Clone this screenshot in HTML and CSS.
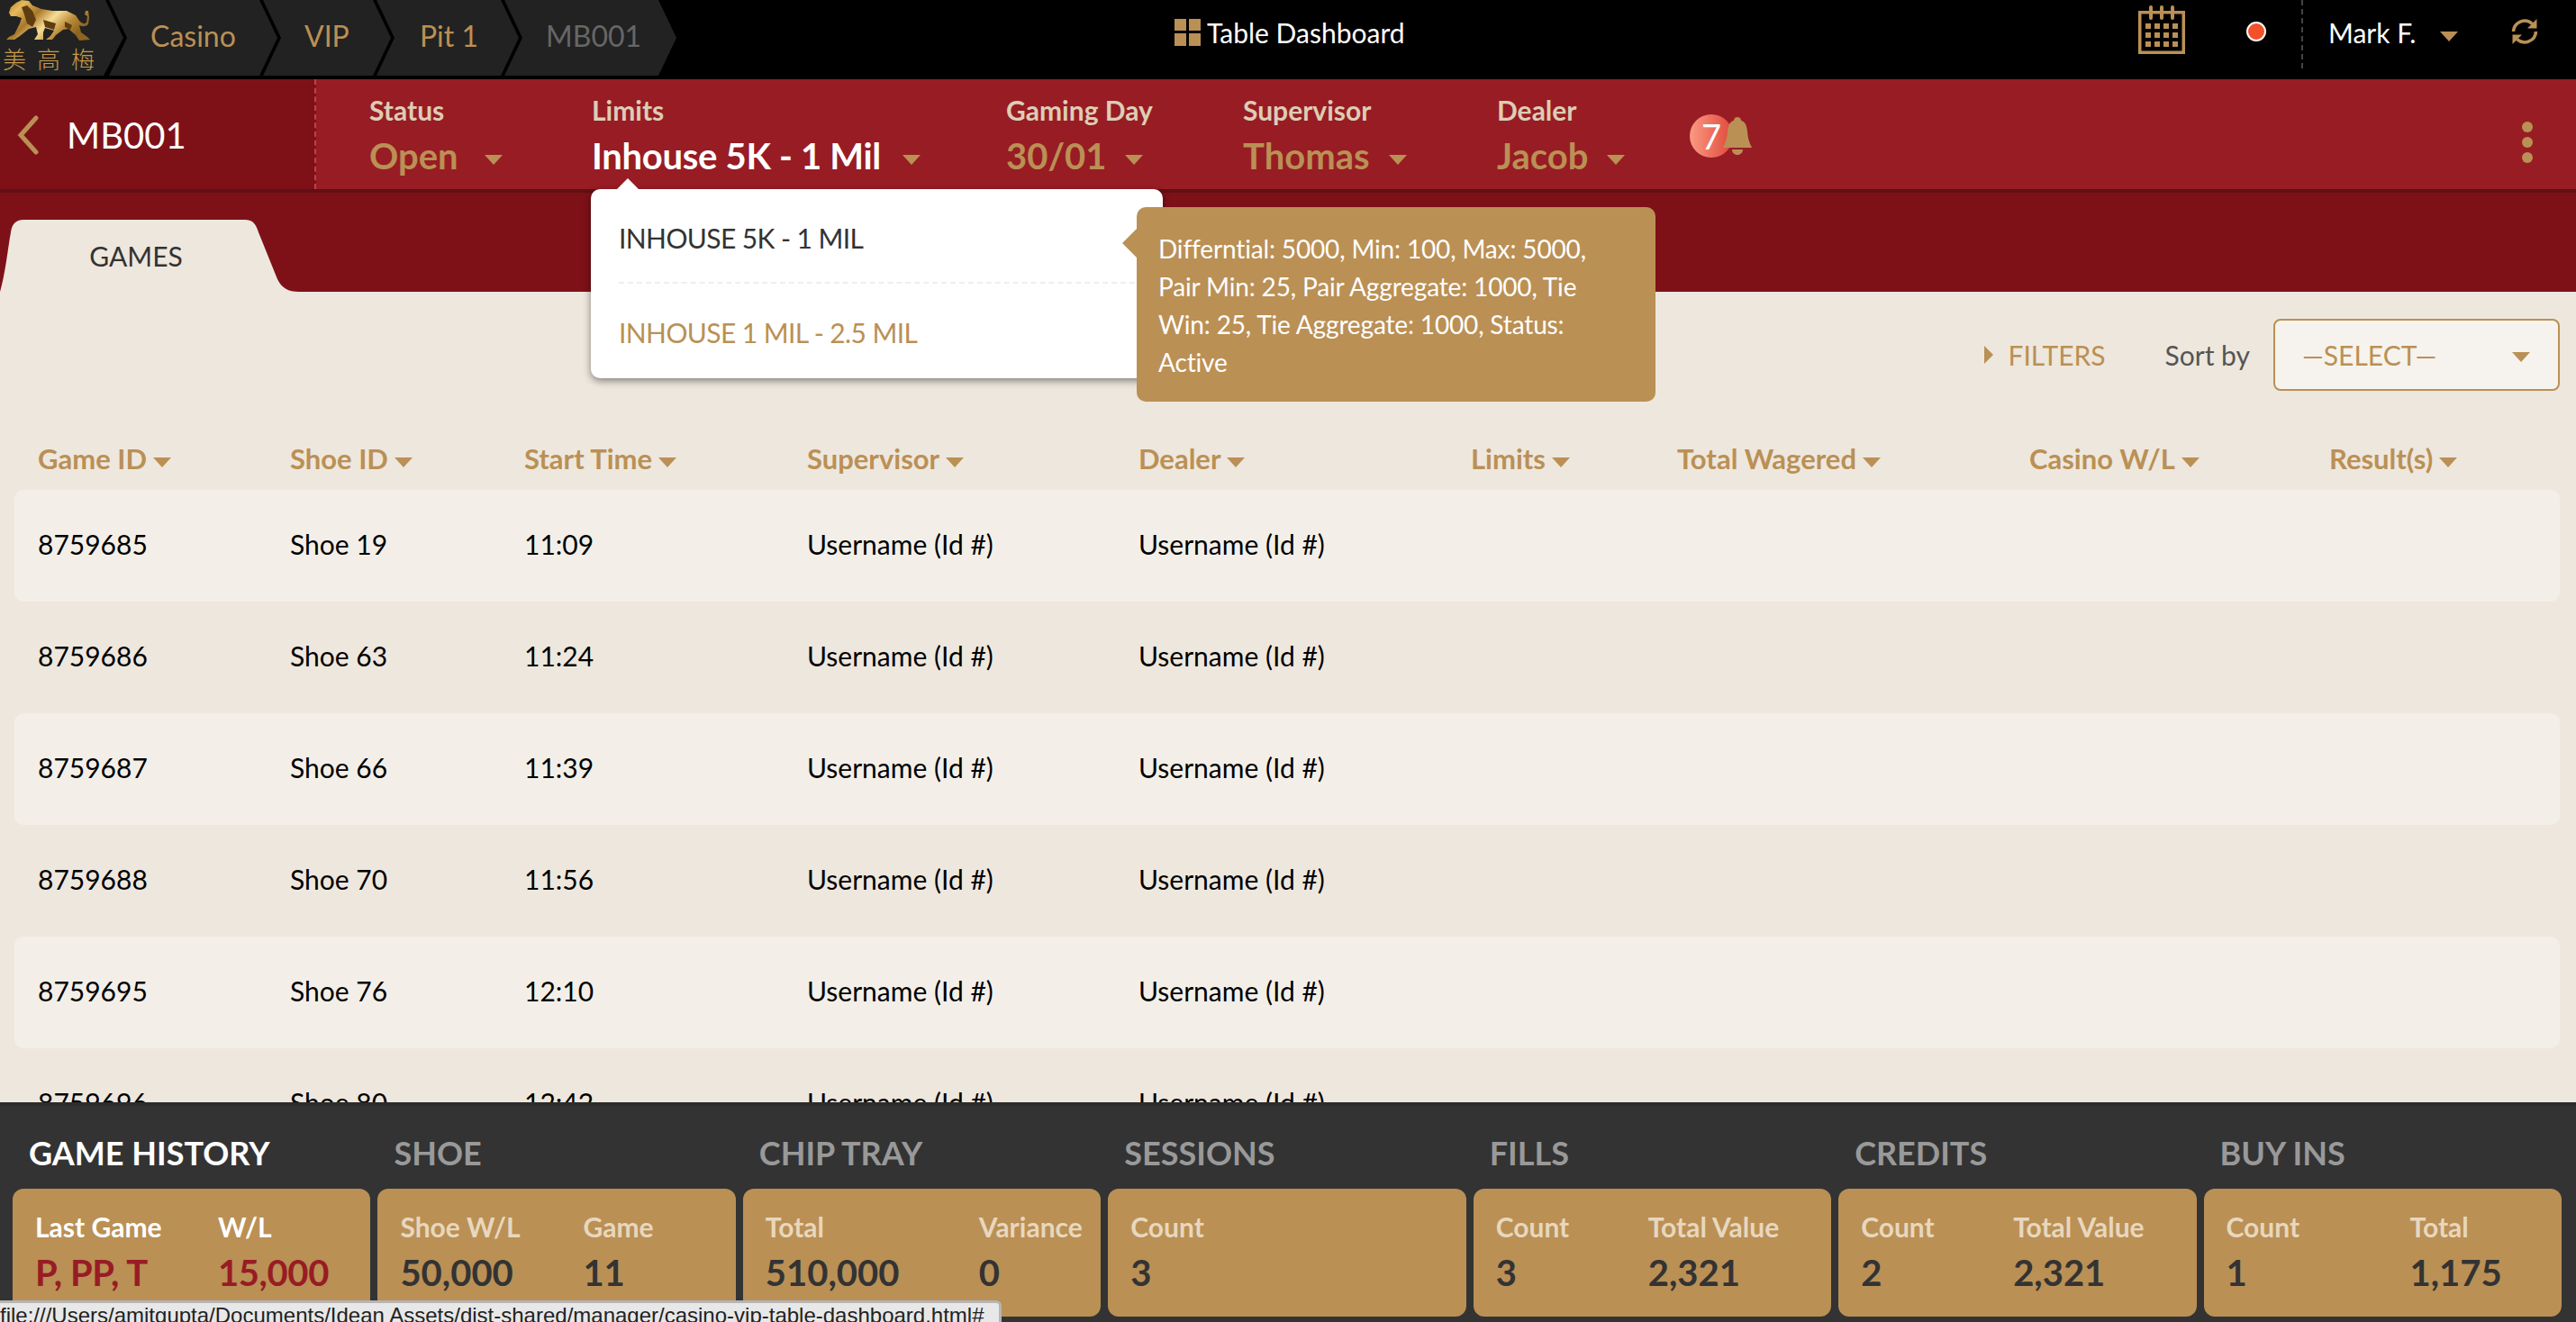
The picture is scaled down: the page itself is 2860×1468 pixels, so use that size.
FILE: index.html
```html
<!DOCTYPE html>
<html lang="en">
<head>
  <meta charset="UTF-8">
  <title>Table Dashboard</title>
  <link rel="stylesheet" href="styles.css">
</head>
<body>
<div class="page">
  <div class="topbar">
    <div class="crumbs">
      <div class="crumb crumb-logo">
        <svg class="lion" width="102" height="46" viewBox="0 0 102 46">
          <defs>
            <linearGradient id="gold" x1="0" y1="0" x2="1" y2="0.5">
              <stop offset="0" stop-color="#a87420"/>
              <stop offset="0.2" stop-color="#e6bb5c"/>
              <stop offset="0.42" stop-color="#a9772a"/>
              <stop offset="0.62" stop-color="#f6dd94"/>
              <stop offset="0.82" stop-color="#b98a38"/>
              <stop offset="1" stop-color="#8e6420"/>
            </linearGradient>
          </defs>
          <path fill="url(#gold)" d="M10 14 L12 8 L18 3 L24 0 L32 1 L36 6 L46 10 L58 12 L74 12 L84 17 L88 23 Q92 28 96 25 L97 18 L94 16 L95 12 L98 12 L99 20 L98 27 Q94 31 88 28 L90 36 L97 41 L100 44 L88 45 L84 39 L76 32 L70 33 L62 39 L58 44 L51 44 L56 40 L60 34 L50 31 L48 36 L48 44 L38 44 L42 38 L40 30 L32 32 L22 40 L16 44 L7 44 L10 41 L16 38 L22 26 L24 20 L18 18 L12 18 Z"/>
          <path fill="#5e3d10" d="M24 8 L30 6 L36 12 L40 22 L36 30 L30 26 L27 16 Z M48 22 L62 26 L60 33 L50 30 Z M72 24 L80 28 L78 33 L72 30 Z"/>
        </svg>
        <div class="logo-text"><span>美</span><span>高</span><span>梅</span></div>
      </div>
      <div class="crumb crumb-casino">Casino</div>
      <div class="crumb crumb-vip">VIP</div>
      <div class="crumb crumb-pit">Pit 1</div>
      <div class="crumb crumb-table">MB001</div>
    </div>
    <div class="page-title">
      <svg width="29" height="30" viewBox="0 0 29 30"><path fill="#ba9055" d="M0 0h13v13H0zM16 0h13v13H16zM0 16h13v14H0zM16 16h13v14H16z"/></svg>
      <span>Table Dashboard</span>
    </div>
    <div class="top-right">
      <svg class="cal" width="52" height="54" viewBox="0 0 52 54">
        <path fill="none" stroke="#ba9055" stroke-width="3.5" d="M1.750 7.750h48.500v44.500H1.750z"/>
        <path fill="none" stroke="#ba9055" stroke-width="4" stroke-linecap="round" d="M14 2v12M26 2v12M38 2v12"/>
        <path fill="#ba9055" d="M8 20h6v6H8zM18 20h6v6h-6zM28 20h6v6h-6zM38 20h6v6h-6zM8 30h6v6H8zM18 30h6v6h-6zM28 30h6v6h-6zM38 30h6v6h-6zM8 40h6v6H8zM18 40h6v6h-6zM28 40h6v6h-6zM38 40h6v6h-6z"/>
      </svg>
      <div class="live-dot"></div>
      <div class="user">Mark F.<i class="caret caret-user"></i></div>
      <svg class="refresh" width="30" height="30" viewBox="0 0 30 30">
        <path fill="none" stroke="#ba9055" stroke-width="3.6" d="M2.500 15A12.500 12.500 0 0 1 23.500 6.500"/>
        <path fill="#ba9055" d="M28.500 1v10.500H18z"/>
        <path fill="none" stroke="#ba9055" stroke-width="3.6" d="M27.500 15A12.500 12.500 0 0 1 6.500 23.500"/>
        <path fill="#ba9055" d="M1.500 29V18.500H12z"/>
      </svg>
    </div>
  </div>

  <div class="subbar">
    <div class="back">
      <svg width="24" height="44" viewBox="0 0 24 44"><path fill="none" stroke="#ba9055" stroke-width="5" stroke-linecap="round" d="M21 3L4 22l17 19"/></svg>
      <span>MB001</span>
    </div>
    <div class="fields">
      <div class="field field-status"><label>Status</label><div class="val">Open<i class="caret caret-open"></i></div></div>
      <div class="field field-limits">
        <label>Limits</label><div class="val val-active">Inhouse 5K - 1 Mil<i class="caret caret-limit"></i></div>
        <div class="limit-menu">
          <div class="limit-item">INHOUSE 5K - 1 MIL</div>
          <div class="limit-item limit-item-alt">INHOUSE 1 MIL - 2.5 MIL</div>
        </div>
        <div class="limit-tip">Differntial: 5000, Min: 100, Max: 5000, Pair Min: 25, Pair Aggregate: 1000, Tie Win: 25, Tie Aggregate: 1000, Status: Active</div>
      </div>
      <div class="field field-day"><label>Gaming Day</label><div class="val">30/01<i class="caret"></i></div></div>
      <div class="field field-sup"><label>Supervisor</label><div class="val">Thomas<i class="caret"></i></div></div>
      <div class="field field-dealer"><label>Dealer</label><div class="val">Jacob<i class="caret"></i></div></div>
      <div class="alerts">
        <div class="badge">7</div>
        <svg class="bell" width="32" height="42" viewBox="0 0 32 42"><path fill="#ba9055" d="M16 0c2.200 0 4 1.600 4 3.800C25 5.500 26.500 10 27 16c.5 7 2 12 5 18H0c3-6 4.500-11 5-18 .5-6 2-10.500 7-12.200C12 1.600 13.800 0 16 0zM10 36h12c0 3.500-2.600 6-6 6s-6-2.500-6-6z"/></svg>
      </div>
    </div>
    <div class="more"><span></span><span></span><span></span></div>
  </div>

  <div class="tabband">
    <div class="tab">GAMES</div>
  </div>

  <div class="main">
    <div class="toolbar">
      <div class="filters"><i class="tri-right"></i>FILTERS</div>
      <div class="sort-label">Sort by</div>
      <div class="select">—SELECT—<i class="caret"></i></div>
    </div>
    <div class="thead row-grid">
      <div>Game ID<i class="caret"></i></div>
      <div>Shoe ID<i class="caret"></i></div>
      <div>Start Time<i class="caret"></i></div>
      <div>Supervisor<i class="caret"></i></div>
      <div>Dealer<i class="caret"></i></div>
      <div>Limits<i class="caret"></i></div>
      <div>Total Wagered<i class="caret"></i></div>
      <div>Casino W/L<i class="caret"></i></div>
      <div>Result(s)<i class="caret"></i></div>
    </div>
    <div class="row row-grid"><div>8759685</div><div>Shoe 19</div><div>11:09</div><div>Username (Id #)</div><div>Username (Id #)</div></div>
    <div class="row row-grid"><div>8759686</div><div>Shoe 63</div><div>11:24</div><div>Username (Id #)</div><div>Username (Id #)</div></div>
    <div class="row row-grid"><div>8759687</div><div>Shoe 66</div><div>11:39</div><div>Username (Id #)</div><div>Username (Id #)</div></div>
    <div class="row row-grid"><div>8759688</div><div>Shoe 70</div><div>11:56</div><div>Username (Id #)</div><div>Username (Id #)</div></div>
    <div class="row row-grid"><div>8759695</div><div>Shoe 76</div><div>12:10</div><div>Username (Id #)</div><div>Username (Id #)</div></div>
    <div class="row row-grid"><div>8759696</div><div>Shoe 80</div><div>12:42</div><div>Username (Id #)</div><div>Username (Id #)</div></div>
  </div>

  <div class="bottom">
    <div class="panel">
      <h3 class="panel-title panel-title-on">GAME HISTORY</h3>
      <div class="card card-on cols-history">
        <div><label>Last Game</label><b class="red">P, PP, T</b></div>
        <div><label>W/L</label><b class="red">15,000</b></div>
      </div>
    </div>
    <div class="panel">
      <h3 class="panel-title">SHOE</h3>
      <div class="card cols-history">
        <div><label>Shoe W/L</label><b>50,000</b></div>
        <div><label>Game</label><b>11</b></div>
      </div>
    </div>
    <div class="panel">
      <h3 class="panel-title">CHIP TRAY</h3>
      <div class="card cols-chip">
        <div><label>Total</label><b>510,000</b></div>
        <div><label>Variance</label><b>0</b></div>
      </div>
    </div>
    <div class="panel">
      <h3 class="panel-title">SESSIONS</h3>
      <div class="card">
        <div><label>Count</label><b>3</b></div>
      </div>
    </div>
    <div class="panel">
      <h3 class="panel-title">FILLS</h3>
      <div class="card cols-fills">
        <div><label>Count</label><b>3</b></div>
        <div><label>Total Value</label><b>2,321</b></div>
      </div>
    </div>
    <div class="panel">
      <h3 class="panel-title">CREDITS</h3>
      <div class="card cols-fills">
        <div><label>Count</label><b>2</b></div>
        <div><label>Total Value</label><b>2,321</b></div>
      </div>
    </div>
    <div class="panel">
      <h3 class="panel-title">BUY INS</h3>
      <div class="card cols-buy">
        <div><label>Count</label><b>1</b></div>
        <div><label>Total</label><b>1,175</b></div>
      </div>
    </div>
  </div>

  <div class="status-url">file:///Users/amitgupta/Documents/Idean Assets/dist-shared/manager/casino-vip-table-dashboard.html#</div>
</div>
</body>
</html>
```

FILE: styles.css
```css
html, body {
  margin: 0;
  height: 100%;
  overflow: hidden;
}

body {
  font-family: Lato, "Noto Sans", sans-serif;
  background-color: #eee7dd;
  color: #000;
}

.page {
  height: 100vh;
  display: flex;
  flex-direction: column;
  position: relative;
}

.caret {
  display: inline-block;
  width: 0;
  height: 0;
  border-left: 10px solid transparent;
  border-right: 10px solid transparent;
  border-top: 11px solid #ba9055;
  margin-left: 21px;
  vertical-align: middle;
}

/* top bar */
.topbar {
  height: 88px;
  background-color: #000;
  display: flex;
  position: relative;
  flex-shrink: 0;
}

.crumbs {
  display: flex;
  height: 84px;
}

.crumb {
  background-color: #222;
  height: 84px;
  font-size: 32px;
  line-height: 80px;
  color: #ba9055;
  box-sizing: border-box;
  clip-path: polygon(0 0, calc(100% - 20px) 0, 100% 50%, calc(100% - 20px) 100%, 0 100%, 20px 50%);
  margin-right: -16px;
  padding-left: 46px;
}

.crumb-logo {
  width: 137px;
  clip-path: polygon(0 0, calc(100% - 20px) 0, 100% 50%, calc(100% - 22px) 100%, 0 100%);
  padding-left: 0;
  line-height: normal;
}

.lion {
  display: block;
}

.logo-text {
  display: flex;
  gap: 12px;
  font-family: "Noto Sans CJK TC", serif;
  font-size: 26px;
  line-height: 30px;
  margin: 4px 0 0 3px;
  color: #c89b48;
  font-weight: 300;
}

.crumb-casino { width: 187px; }
.crumb-vip { width: 142px; }
.crumb-pit { width: 158px; padding-left: 48px; }
.crumb-table { width: 191px; color: #666; }

.page-title {
  position: absolute;
  left: 1304px;
  top: 21px;
  display: flex;
  align-items: center;
  gap: 7px;
  color: #fff;
  font-size: 30px;
  line-height: 30px;
}

.top-right {
  margin-left: auto;
  display: flex;
  align-items: flex-start;
}

.cal {
  margin-top: 6px;
}

.live-dot {
  width: 18px;
  height: 18px;
  background-color: #f4502a;
  border: 2px solid #fff;
  border-radius: 50%;
  margin: 24px 0 0 68px;
}

.user {
  height: 76px;
  border-left: 2px dashed #444;
  margin-left: 39px;
  padding-left: 28px;
  color: #fff;
  font-size: 30px;
  line-height: 72px;
  width: 202px;
  box-sizing: border-box;
}

.caret-user {
  margin-left: 27px;
}

.refresh {
  margin: 20px 42px 0 31px;
}

/* red sub bar */
.subbar {
  height: 126px;
  box-sizing: border-box;
  background-color: #981c24;
  border-bottom: 4px solid #5f1015;
  display: flex;
  flex-shrink: 0;
}

.back {
  width: 351px;
  box-sizing: border-box;
  background-color: #7e1118;
  border-right: 2px dashed #b8434a;
  display: flex;
  align-items: center;
  padding: 2px 0 0 19px;
  gap: 31px;
  color: #fff;
  font-size: 40px;
}

.fields {
  display: flex;
  flex: 1;
  padding-left: 59px;
}

.field {
  position: relative;
  padding-top: 16px;
}

.field label {
  display: block;
  color: #ddcdb5;
  font-size: 30px;
  font-weight: 700;
  line-height: 36px;
}

.val {
  color: #ba9055;
  font-size: 40px;
  font-weight: 700;
  line-height: 50px;
  margin-top: 8px;
  white-space: nowrap;
}

.val-active {
  color: #fff;
  letter-spacing: -0.3px;
}

.caret-open { margin-left: 29px; }
.caret-limit { margin-left: 24px; }

.field-status { width: 247px; }
.field-limits { width: 460px; }
.field-day { width: 263px; }
.field-sup { width: 282px; }
.field-dealer { width: 214px; }

.alerts {
  display: flex;
  align-items: center;
  padding-top: 4px;
}

.badge {
  width: 48px;
  height: 48px;
  border-radius: 50%;
  background: linear-gradient(90deg, #fa9a82, #e0473a);
  color: #fff;
  font-size: 38px;
  line-height: 48px;
  text-align: center;
}

.bell {
  margin-left: -11px;
}

.more {
  display: flex;
  flex-direction: column;
  gap: 5px;
  margin: 47px 48px 0 0;
}

.more span {
  width: 12px;
  height: 12px;
  border-radius: 50%;
  background-color: #ba9055;
}

/* dropdown over the content */
.limit-menu {
  position: absolute;
  left: -1px;
  top: 122px;
  width: 635px;
  height: 210px;
  background-color: #fff;
  border-radius: 10px;
  box-shadow: 0 3px 8px rgba(0, 0, 0, 0.45);
  z-index: 5;
  box-sizing: border-box;
  padding: 0 31px;
}

.limit-menu:before {
  content: "";
  position: absolute;
  left: 28px;
  top: -12px;
  border-left: 13px solid transparent;
  border-right: 13px solid transparent;
  border-bottom: 13px solid #fff;
}

.limit-item {
  height: 105px;
  line-height: 108px;
  font-size: 30px;
  letter-spacing: -0.6px;
  color: #333;
  border-bottom: 2px dashed #eee;
  box-sizing: border-box;
  white-space: nowrap;
}

.limit-item-alt {
  color: #ba9055;
  border-bottom: none;
}

.limit-tip {
  position: absolute;
  left: 605px;
  top: 142px;
  width: 576px;
  height: 216px;
  box-sizing: border-box;
  background-color: #ba9055;
  border-radius: 10px;
  color: #fff;
  font-size: 28px;
  letter-spacing: -0.15px;
  line-height: 42px;
  padding: 25px 24px;
  z-index: 6;
}

.limit-tip:before {
  content: "";
  position: absolute;
  left: -16px;
  top: 24px;
  border-top: 16px solid transparent;
  border-bottom: 16px solid transparent;
  border-right: 16px solid #ba9055;
}

/* tabs */
.tabband {
  height: 110px;
  background-color: #7e1118;
  flex-shrink: 0;
  display: flex;
  align-items: flex-end;
}

.tab {
  width: 332px;
  height: 80px;
  background-color: #eee7dd;
  clip-path: path("M0 80 C6 60 9 30 12 14 C13 5 18 0 26 0 L272 0 C280 0 284 4 287 14 L308 66 C313 76 320 80 332 80 Z");
  color: #333;
  font-size: 30px;
  line-height: 80px;
  text-align: center;
  box-sizing: border-box;
  padding-right: 30px;
}

/* table */
.main {
  flex: 1;
  overflow: hidden;
  min-height: 0;
}

.toolbar {
  height: 110px;
  padding-top: 30px;
  box-sizing: border-box;
  display: flex;
  align-items: center;
  justify-content: flex-end;
  padding-right: 18px;
  font-size: 30px;
}

.filters {
  color: #ba9055;
  display: flex;
  align-items: center;
}

.tri-right {
  width: 0;
  height: 0;
  border-top: 10px solid transparent;
  border-bottom: 10px solid transparent;
  border-left: 10px solid #ba9055;
  margin-right: 17px;
}

.sort-label {
  color: #555;
  margin-left: 66px;
}

.select {
  width: 318px;
  height: 80px;
  box-sizing: border-box;
  border: 2px solid #ba9055;
  border-radius: 8px;
  background-color: #f6f3ee;
  color: #ba9055;
  margin-left: 26px;
  padding-left: 30px;
  line-height: 76px;
  position: relative;
}

.select .caret {
  position: absolute;
  right: 31px;
  top: 35px;
}

.row-grid {
  display: grid;
  grid-template-columns: 280px 260px 314px 368px 369px 229px 391px 333px 1fr;
  margin: 0 18px 0 16px;
  padding-left: 26px;
  font-size: 30px;
}

.thead {
  height: 110px;
  box-sizing: border-box;
  padding-top: 40px;
  line-height: 70px;
  font-size: 31px;
  color: #ba9055;
  font-weight: 700;
  white-space: nowrap;
}

.thead .caret {
  margin-left: 7px;
}

.row {
  height: 124px;
  line-height: 120px;
}

.row:nth-of-type(odd) {
  background-color: #f3efe8;
  border-radius: 10px;
}

/* bottom panels */
.bottom {
  height: 244px;
  background-color: #333;
  border-top: 4px solid #2c2c2c;
  box-sizing: border-box;
  display: grid;
  grid-template-columns: repeat(7, 1fr);
  gap: 8px;
  padding: 0 16px 6px 14px;
  flex-shrink: 0;
}

.panel-title {
  margin: 0;
  height: 92px;
  box-sizing: border-box;
  padding: 14px 0 0 18px;
  line-height: 76px;
  font-size: 36px;
  font-weight: 700;
  color: #999;
}

.panel-title-on {
  color: #fff;
}

.card {
  height: 142px;
  background-color: #ba9055;
  border-radius: 12px;
  display: grid;
  grid-template-columns: 1fr;
  padding: 23px 0 0 25px;
  box-sizing: border-box;
}

.cols-history { grid-template-columns: 203px 1fr; }
.cols-chip { grid-template-columns: 237px 1fr; }
.cols-fills { grid-template-columns: 169px 1fr; }
.cols-buy { grid-template-columns: 204px 1fr; }

.card label {
  display: block;
  color: #e8d7bd;
  font-size: 30px;
  font-weight: 700;
  line-height: 38px;
  white-space: nowrap;
}

.card b {
  display: block;
  color: #333;
  font-size: 40px;
  font-weight: 700;
  line-height: 50px;
  margin-top: 7px;
  white-space: nowrap;
}

.card-on label {
  color: #fff;
}

.card b.red {
  color: #981c24;
  letter-spacing: -0.4px;
}

.status-url {
  position: absolute;
  left: 0;
  bottom: 0;
  width: 1112px;
  height: 24px;
  box-sizing: border-box;
  background-color: #e8e8e8;
  border: 3px solid #b5b5b5;
  border-left: none;
  border-bottom: none;
  border-top-right-radius: 6px;
  font-family: "Liberation Sans", Arial, sans-serif;
  font-size: 24px;
  line-height: 28px;
  color: #222;
  white-space: nowrap;
  overflow: hidden;
  z-index: 9;
}
```
